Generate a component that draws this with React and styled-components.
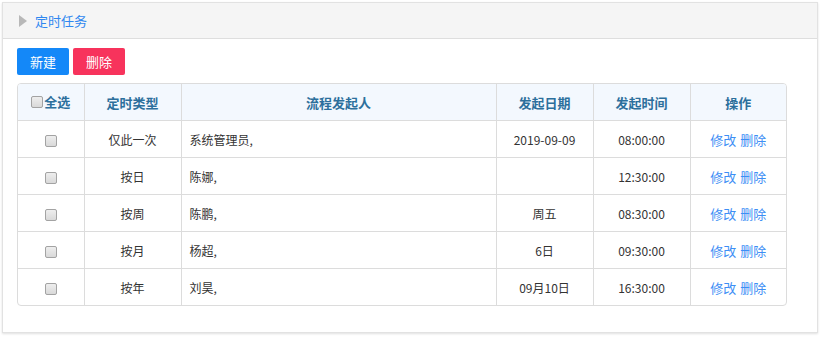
import React from "react";
import styled, { createGlobalStyle } from "styled-components";

// ------------------------ STYLES ------------------------

const GlobalStyle = createGlobalStyle`
  html, body {
    margin: 0;
    padding: 0;
    background: #fff;
  }
  body {
    font-family: "Microsoft YaHei", "Noto Sans CJK SC", "Noto Sans", sans-serif;
    font-size: 12px;
    color: #333;
  }
`;

const Page = styled.div`
  padding: 2px 5px 5px 2px;
`;

const Panel = styled.section`
  width: 816px;
  height: 331px;
  box-sizing: border-box;
  background: #fff;
  border: 1px solid #e2e2e2;
  box-shadow: 0 1px 2px rgba(0, 0, 0, 0.12);
  display: flex;
  flex-direction: column;
`;

const PanelHeader = styled.div`
  height: 35px;
  background: #f5f5f5;
  border-bottom: 1px solid #dedede;
  display: flex;
  align-items: center;
  padding-left: 16px;
  gap: 8px;
`;

const Caret = styled.span`
  width: 0;
  height: 0;
  border-top: 6px solid transparent;
  border-bottom: 6px solid transparent;
  border-left: 8px solid #b8b8b8;
`;

const PanelTitle = styled.span`
  font-size: 13px;
  color: #2f87f0;
`;

const PanelBody = styled.div`
  padding: 9px 30px 0 14px;
`;

const Toolbar = styled.div`
  display: flex;
  gap: 4px;
  margin-bottom: 8px;
`;

const Button = styled.button`
  width: 52px;
  height: 27px;
  border: none;
  border-radius: 2px;
  font-family: inherit;
  font-size: 13px;
  color: #fff;
  background: ${(p) => (p.$danger ? "#f7335c" : "#1488f8")};
  padding: 0;
  cursor: pointer;
`;

const TableWrap = styled.div`
  border: 1px solid #dcdcdc;
  border-radius: 4px;
  overflow: hidden;
  width: 770px;
  box-sizing: border-box;
`;

const Table = styled.table`
  width: 100%;
  border-collapse: collapse;
  table-layout: fixed;
`;

const Th = styled.th`
  height: 36px;
  background: #f3f8fe;
  color: #2c6f9c;
  font-size: 13px;
  font-weight: bold;
  text-align: center;
  border-left: 1px solid #dcdcdc;
  padding: 0;
  &:first-child {
    border-left: none;
  }
`;

const Td = styled.td`
  height: 36px;
  border-top: 1px solid #dcdcdc;
  border-left: 1px solid #dcdcdc;
  text-align: ${(p) => (p.$left ? "left" : "center")};
  padding: ${(p) => (p.$left ? "0 0 0 8px" : "0")};
  font-size: 12px;
  color: #333;
  &:first-child {
    border-left: none;
  }
`;

const Check = styled.input.attrs({ type: "checkbox" })`
  appearance: none;
  -webkit-appearance: none;
  box-sizing: border-box;
  width: 12px;
  height: 12px;
  margin: 0;
  border: 1px solid #a3a3a3;
  border-radius: 2px;
  background: linear-gradient(#eeeeee, #d9d9d9);
  vertical-align: middle;
`;

const AllLabel = styled.label`
  display: inline-flex;
  align-items: center;
  gap: 1px;
`;

const Action = styled.a`
  color: #3d8ef5;
  font-size: 13px;
  text-decoration: none;
  cursor: pointer;
  & + & {
    margin-left: 4px;
  }
`;

// ------------------------ DATA ------------------------

const columns = [
  { key: "type", title: "定时类型", width: 97 },
  { key: "owner", title: "流程发起人", width: 315 },
  { key: "date", title: "发起日期", width: 97 },
  { key: "time", title: "发起时间", width: 97 },
];

const rows = [
  { type: "仅此一次", owner: "系统管理员,", date: "2019-09-09", time: "08:00:00" },
  { type: "按日", owner: "陈娜,", date: "", time: "12:30:00" },
  { type: "按周", owner: "陈鹏,", date: "周五", time: "08:30:00" },
  { type: "按月", owner: "杨超,", date: "6日", time: "09:30:00" },
  { type: "按年", owner: "刘昊,", date: "09月10日", time: "16:30:00" },
];

// ------------------------ COMPONENT ------------------------

const App = () => (
  <Page>
    <GlobalStyle />
    <Panel>
      <PanelHeader>
        <Caret />
        <PanelTitle>定时任务</PanelTitle>
      </PanelHeader>
      <PanelBody>
        <Toolbar>
          <Button>新建</Button>
          <Button $danger>删除</Button>
        </Toolbar>
        <TableWrap>
          <Table>
            <colgroup>
              <col style={{ width: 66 }} />
              {columns.map((c) => (
                <col key={c.key} style={{ width: c.width }} />
              ))}
              <col />
            </colgroup>
            <thead>
              <tr>
                <Th>
                  <AllLabel>
                    <Check />
                    全选
                  </AllLabel>
                </Th>
                {columns.map((c) => (
                  <Th key={c.key}>{c.title}</Th>
                ))}
                <Th>操作</Th>
              </tr>
            </thead>
            <tbody>
              {rows.map((r, i) => (
                <tr key={i}>
                  <Td>
                    <Check />
                  </Td>
                  <Td>{r.type}</Td>
                  <Td $left>{r.owner}</Td>
                  <Td>{r.date}</Td>
                  <Td>{r.time}</Td>
                  <Td>
                    <Action>修改</Action>
                    <Action>删除</Action>
                  </Td>
                </tr>
              ))}
            </tbody>
          </Table>
        </TableWrap>
      </PanelBody>
    </Panel>
  </Page>
);

export default App;
